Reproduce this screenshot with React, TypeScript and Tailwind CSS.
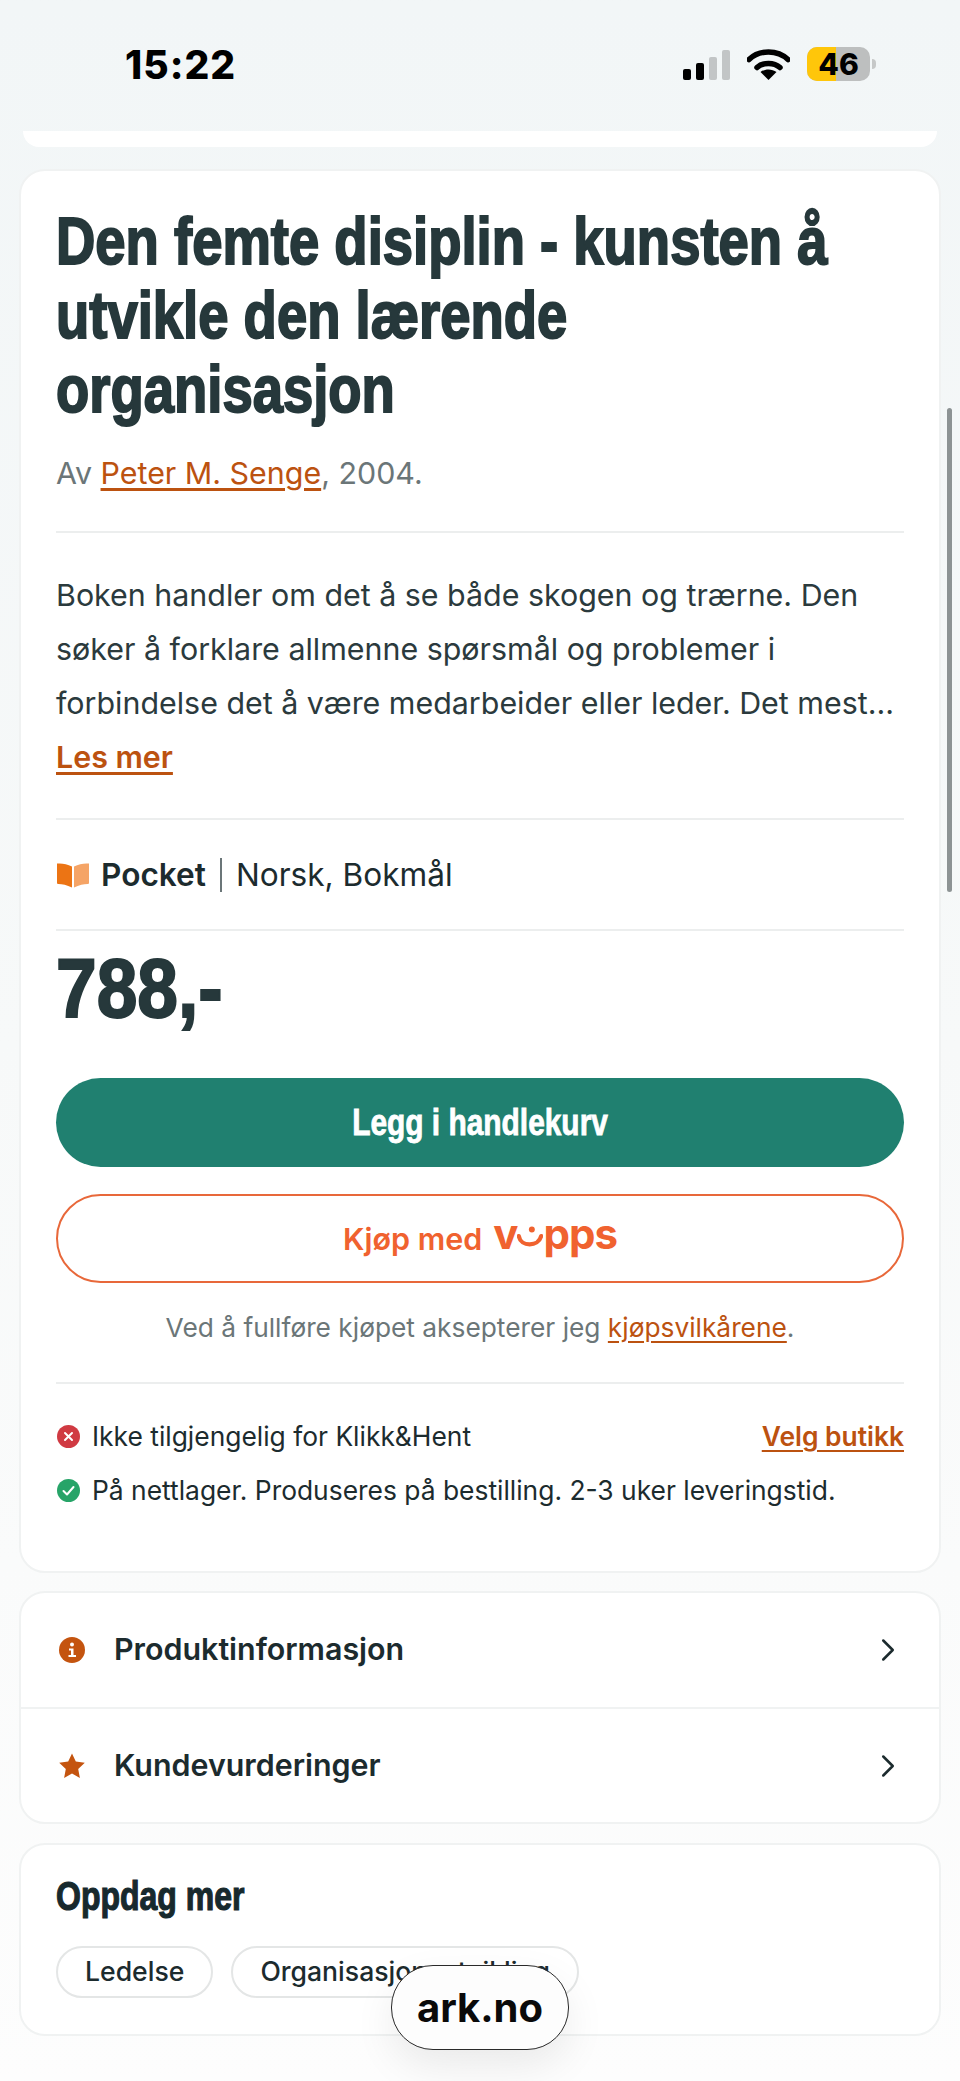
import { ChevronRight } from 'lucide-react';

// Headings use a squeezed heavy grotesk look
const condensed = "font-['Liberation_Sans',sans-serif] font-bold";

function Divider() {
  return <div className="h-[2px] bg-[#eceeee]" />;
}

function StatusBar() {
  return (
    <div className="h-[131px] flex items-start justify-between pl-[125px] pr-[84px] pt-[47px]">
      <span className="text-[39px] leading-[36px] font-extrabold tracking-[1px] text-black">15:22</span>
      <div className="flex items-start">
        <div className="flex items-end gap-[5px] h-[32px] mt-[1px]">
          <div className="w-[8px] h-[11px] rounded-[2px] bg-black" />
          <div className="w-[8px] h-[17px] rounded-[2px] bg-black" />
          <div className="w-[8px] h-[23px] rounded-[2px] bg-[#c2c5c6]" />
          <div className="w-[8px] h-[30px] rounded-[2px] bg-[#c2c5c6]" />
        </div>
        <svg className="ml-[17px] mt-[1px]" width="43" height="32" viewBox="0 0 43 32" fill="none">
          <path d="M2 11.5C12.5 1.5 30.5 1.5 41 11.5" stroke="#000" strokeWidth="5.5" strokeLinecap="round" />
          <path d="M10 19.5C16 14 27 14 33 19.5" stroke="#000" strokeWidth="5.5" strokeLinecap="round" />
          <path d="M21.5 32L13.5 24C18 20.5 25 20.5 29.5 24Z" fill="#000" />
        </svg>
        <div className="relative ml-[17px] w-[63px] h-[34px] rounded-[10px] overflow-hidden bg-[#bdbfbf] flex items-center justify-center">
          <div className="absolute inset-y-0 left-0 w-[29px] bg-[#ffc60a]" />
          <span className="relative text-[30px] leading-none font-extrabold text-black">46</span>
        </div>
        <div className="ml-[2px] mt-[12px] w-[4px] h-[10px] rounded-r-full bg-[#c6c8c8]" />
      </div>
    </div>
  );
}

function ProductCard() {
  return (
    <section className="mt-[22px] bg-white border-2 border-[#f0f2f2] rounded-[26px] px-[35px] pt-[33px] pb-[63px]">
      <h1 className={`${condensed} origin-left scale-x-[0.825] whitespace-nowrap text-[66px] leading-[74px] text-[#26383b] [-webkit-text-stroke:2px_#26383b]`}>
        Den femte disiplin - kunsten å
        <br />
        utvikle den lærende
        <br />
        organisasjon
      </h1>
      <p className="mt-[20px] text-[30.4px] leading-[54px] text-[#6b7678]">
        Av <a className="text-[#bc5210] underline underline-offset-4">Peter M. Senge</a>, 2004.
      </p>
      <div className="mt-[31px]"><Divider /></div>
      <p className="mt-[35px] text-[30.4px] leading-[54px] text-[#2b3a3d]">
        Boken handler om det å se både skogen og trærne. Den søker å forklare allmenne spørsmål og problemer i forbindelse det å være medarbeider eller leder. Det mest...
        <br />
        <a className="font-semibold text-[#bc5210] underline underline-offset-4">Les mer</a>
      </p>
      <div className="mt-[34px]"><Divider /></div>
      <div className="h-[109px] flex items-center text-[31.6px] text-[#1c2b2e]">
        <svg width="34" height="26" viewBox="0 0 34 26" className="mr-[11px]">
          <path d="M1 1.5C6 1 11 2 16 4.5V25.5C11 23 6 22 2.5 22C1.5 22 1 21.5 1 20.5Z" fill="#ec7414" />
          <path d="M33 1.5C28 1 23 2 18 4.5V25.5C23 23 28 22 31.5 22C32.5 22 33 21.5 33 20.5Z" fill="#f5a466" />
        </svg>
        <span className="font-semibold">Pocket</span>
        <span className="mx-[14px] w-[2px] h-[34px] bg-[#6b7678]" />
        <span>Norsk, Bokmål</span>
      </div>
      <Divider />
      <div className={`${condensed} mt-[12px] origin-left scale-x-[0.87] text-[84px] leading-[90px] text-[#26383b] [-webkit-text-stroke:2px_#26383b]`}>788,-</div>
      <button className="mt-[45px] w-full h-[89px] rounded-full bg-[#208070] flex items-center justify-center">
        <span className={`${condensed} scale-x-[0.83] text-white text-[36px] [-webkit-text-stroke:0.8px_#ffffff]`}>Legg i handlekurv</span>
      </button>
      <button className="mt-[27px] w-full h-[89px] rounded-full border-[2.5px] border-[#e8683a] flex items-center justify-center text-[#f0622f] font-semibold text-[30.5px]">
        <span className="mt-[1px]">Kjøp med</span>
        <span className="ml-[11px] -mt-[10px] flex items-center text-[42px] leading-none font-bold tracking-[-1px]">
          v
          <svg width="26" height="24" viewBox="0 0 28 24" className="mt-[6px]" fill="none">
            <path d="M2 11C4 23 23 23 26 11" stroke="#f0622f" strokeWidth="4.5" strokeLinecap="round" />
            <circle cx="16" cy="4" r="3.2" fill="#f0622f" />
          </svg>
          pps
        </span>
      </button>
      <p className="mt-[26px] text-center text-[26.3px] leading-[38px] text-[#6b7678]">
        Ved å fullføre kjøpet aksepterer jeg <a className="text-[#bc5210] underline underline-offset-4">kjøpsvilkårene</a>.
      </p>
      <div className="mt-[35px]"><Divider /></div>
      <div className="mt-[34px] flex items-center justify-between text-[26.4px] leading-[36px] text-[#1c2b2e]">
        <div className="flex items-center gap-[12px]">
          <svg width="23" height="23" viewBox="0 0 23 23" className="ml-[1px]">
            <circle cx="11.5" cy="11.5" r="11.5" fill="#d03a42" />
            <path d="M8 8L15 15M15 8L8 15" stroke="#fff" strokeWidth="2" strokeLinecap="round" />
          </svg>
          Ikke tilgjengelig for Klikk&amp;Hent
        </div>
        <a className="font-semibold text-[#bc5210] underline underline-offset-4">Velg butikk</a>
      </div>
      <div className="mt-[18px] flex items-center gap-[12px] text-[26.4px] leading-[36px] text-[#1c2b2e]">
        <svg width="23" height="23" viewBox="0 0 23 23" className="ml-[1px]">
          <circle cx="11.5" cy="11.5" r="11.5" fill="#27a468" />
          <path d="M6.5 12L10 15.5L16.5 8" stroke="#fff" strokeWidth="2" strokeLinecap="round" strokeLinejoin="round" fill="none" />
        </svg>
        På nettlager. Produseres på bestilling. 2-3 uker leveringstid.
      </div>
    </section>
  );
}

function InfoLinks() {
  return (
    <section className="mt-[18px] bg-white border-2 border-[#f0f2f2] rounded-[26px]">
      <div className="h-[114px] flex items-center pl-[38px] pr-[32px] text-[30.4px] font-semibold text-[#1c2b2e]">
        <svg width="26" height="26" viewBox="0 0 26 26" className="mr-[29px]">
          <circle cx="13" cy="13" r="13" fill="#c4540f" />
          <circle cx="13" cy="7.5" r="2" fill="#fff" />
          <path d="M10 11.5H14.5V18H17V20H9.5V18H12V13.5H10Z" fill="#fff" />
        </svg>
        <span className="flex-1">Produktinformasjon</span>
        <ChevronRight size={38} strokeWidth={1.6} className="text-[#1c2b2e]" />
      </div>
      <div className="h-[2px] bg-[#f0f2f2]" />
      <div className="h-[113px] flex items-center pl-[38px] pr-[32px] text-[30.4px] font-semibold text-[#1c2b2e]">
        <svg width="26" height="26" viewBox="0 0 26 26" className="mr-[29px]">
          <path d="M13 0.5L16.8 8.6L25.8 9.8L19.2 16L20.9 25L13 20.6L5.1 25L6.8 16L0.2 9.8L9.2 8.6Z" fill="#c4540f" />
        </svg>
        <span className="flex-1">Kundevurderinger</span>
        <ChevronRight size={38} strokeWidth={1.6} className="text-[#1c2b2e]" />
      </div>
    </section>
  );
}

function Discover() {
  return (
    <section className="mt-[19px] h-[193px] bg-white border-2 border-[#f0f2f2] rounded-[26px] px-[35px] pt-[26px]">
      <h2 className={`${condensed} origin-left scale-x-[0.8] text-[40px] leading-[50px] text-[#17292d] [-webkit-text-stroke:1.2px_#17292d]`}>Oppdag mer</h2>
      <div className="mt-[25px] flex gap-[18px]">
        {['Ledelse', 'Organisasjonsutvikling'].map((tag) => (
          <span key={tag} className="h-[52px] px-[27px] flex items-center rounded-full border-2 border-[#e4e6e6] text-[26.6px] font-medium text-[#1c2b2e]">
            {tag}
          </span>
        ))}
      </div>
    </section>
  );
}

export default function App() {
  return (
    <div className="relative h-[2081px] overflow-hidden bg-gradient-to-b from-[#f2f6f7] via-[#f7f9f9] to-[#fdfdfd] font-['Inter',sans-serif]">
      <StatusBar />
      <div className="px-[19px]">
        <div className="mx-[4px] h-[16px] bg-white rounded-b-[18px]" />
        <ProductCard />
        <InfoLinks />
        <Discover />
      </div>
      {/* scroll indicator */}
      <div className="absolute left-[947px] top-[408px] w-[5px] h-[484px] rounded-full bg-[#8d9394]" />
      {/* address pill */}
      <div className="absolute left-[391px] top-[1965px] w-[178px] h-[85px] rounded-[42px] border-[1.5px] border-[#2a2a2a] bg-[#fdfdfd] shadow-[0_16px_40px_rgba(0,0,0,0.08)] flex items-center justify-center text-[40px] font-bold text-[#0a0a0a]">
        ark.no
      </div>
    </div>
  );
}
